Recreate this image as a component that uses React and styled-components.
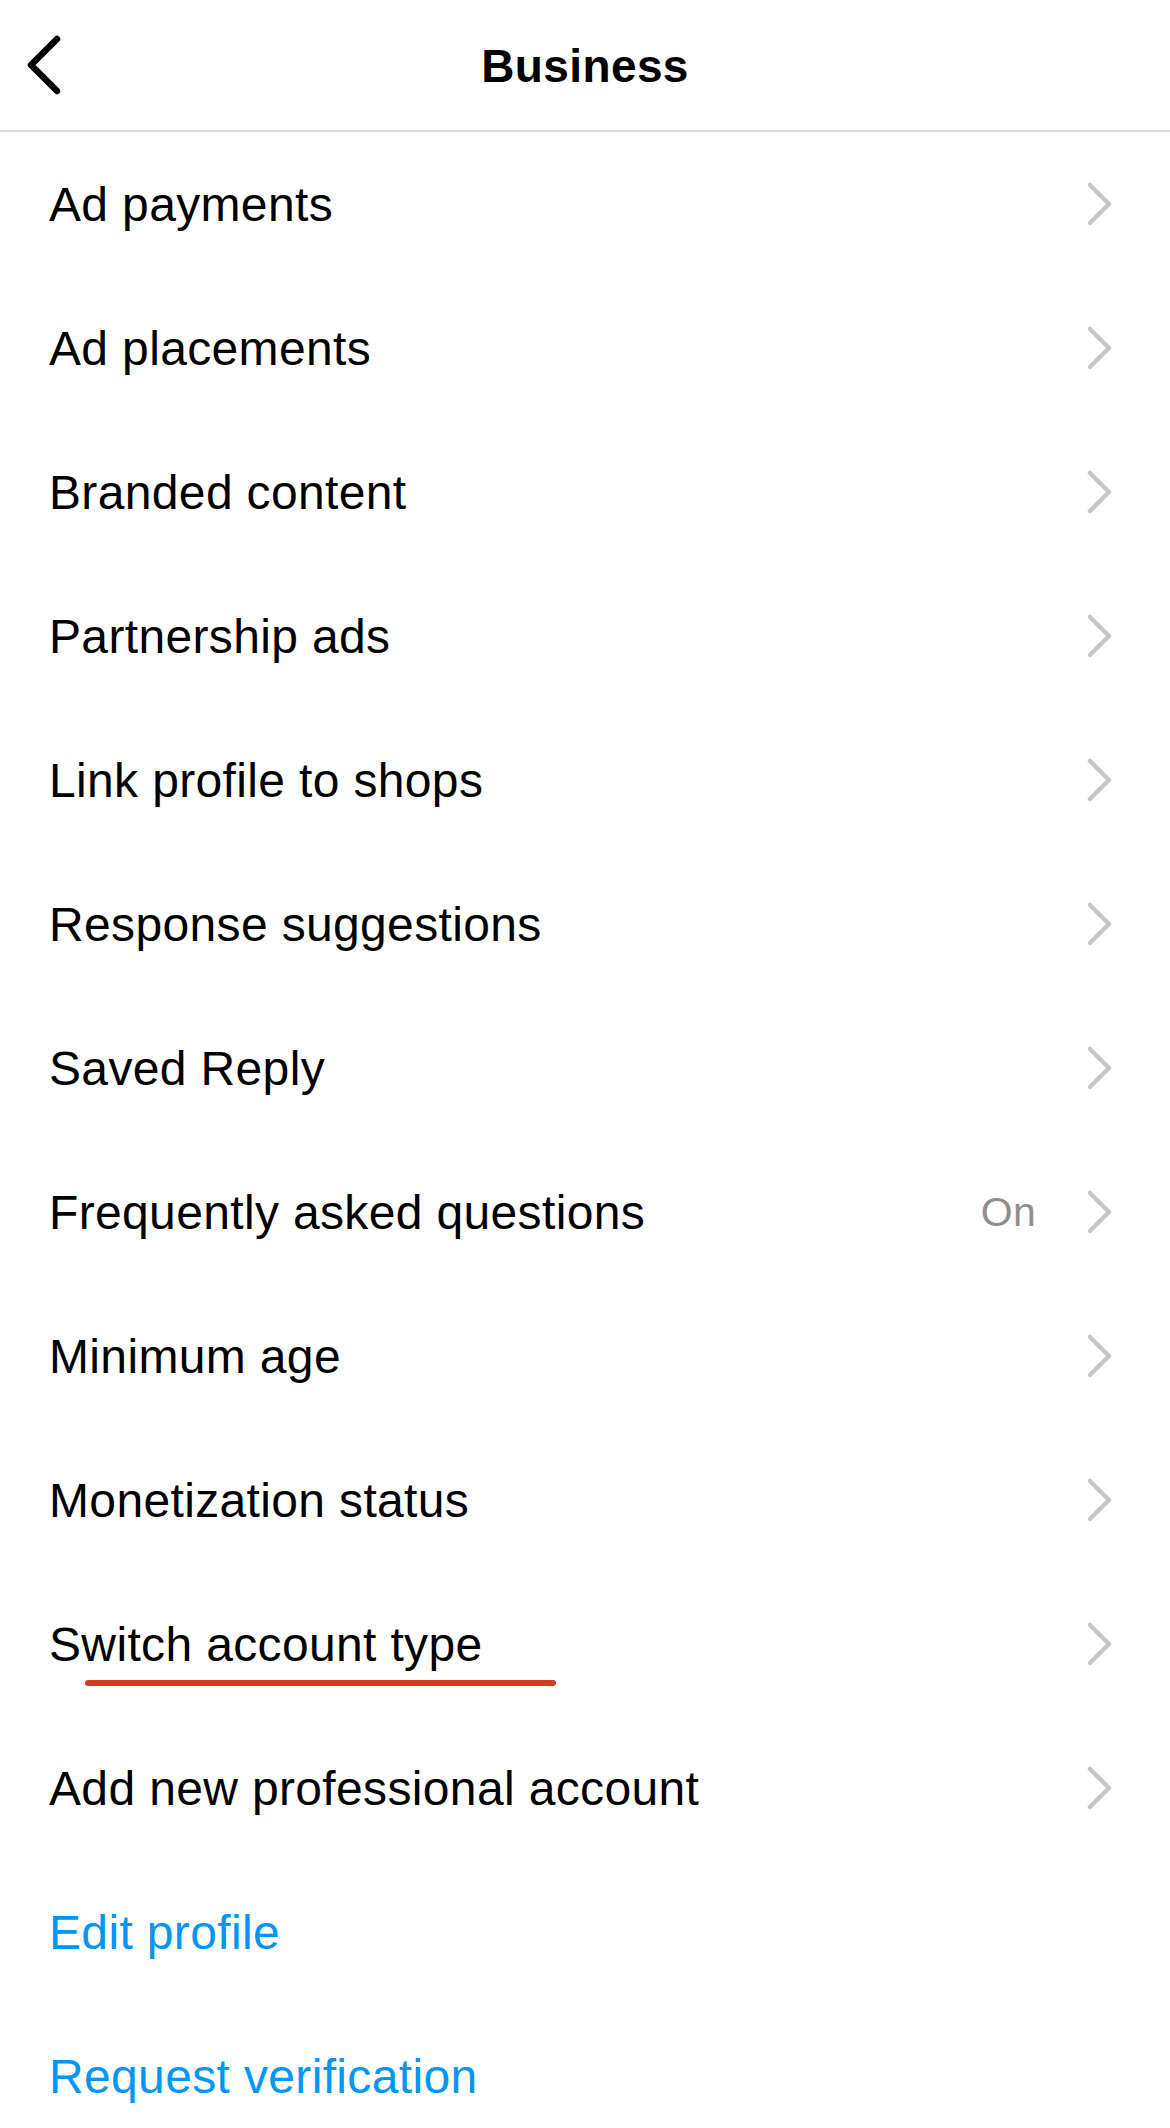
import React from 'react'
import styled, { createGlobalStyle } from 'styled-components'

const GlobalStyle = createGlobalStyle`
  * { box-sizing: border-box; }
  html, body { margin: 0; padding: 0; background: #fff; }
  body {
    font-family: "Liberation Sans", Arial, sans-serif;
    -webkit-font-smoothing: antialiased;
  }
`

const Screen = styled.div`
  width: 1170px;
  height: 2128px;
  overflow: hidden;
  background: #fff;
  color: #000;
`

const Header = styled.header`
  height: 132px;
  display: grid;
  grid-template-columns: 120px 1fr 120px;
  align-items: center;
  border-bottom: 2px solid #dbdbdb;
`

const BackButton = styled.button`
  border: 0;
  background: none;
  padding: 0 0 0 23px;
  height: 100%;
  display: flex;
  align-items: center;
  cursor: pointer;
`

const Title = styled.h1`
  margin: 0;
  padding-top: 2px;
  text-align: center;
  font-size: 46px;
  font-weight: 700;
  letter-spacing: 0.4px;
`

const List = styled.ul`
  list-style: none;
  margin: 0;
  padding: 0;
`

const Row = styled.li`
  position: relative;
  height: 144px;
  display: flex;
  align-items: center;
  padding: 0 56px 0 49px;
`

const Label = styled.span`
  flex: 1;
  font-size: 48px;
  letter-spacing: 0.35px;
  color: ${(p) => (p.$link ? '#0095f6' : '#000')};
`

const Value = styled.span`
  font-size: 41px;
  letter-spacing: 0.3px;
  color: #8e8e8e;
  margin-right: 50px;
`

const Underline = styled.span`
  position: absolute;
  left: 85px;
  top: 108px;
  width: 471px;
  height: 6px;
  border-radius: 3px;
  background: #d33b21;
`

const BackIcon = () => (
  <svg width="40" height="60" viewBox="0 0 40 60" fill="none">
    <path
      d="M34 4 L8 30 L34 56"
      stroke="#000"
      strokeWidth="6.5"
      strokeLinecap="round"
      strokeLinejoin="round"
    />
  </svg>
)

const Chevron = () => (
  <svg width="28" height="46" viewBox="0 0 28 46" fill="none">
    <path
      d="M4 4 L23 23 L4 42"
      stroke="#c7c7c7"
      strokeWidth="4.5"
      strokeLinecap="round"
      strokeLinejoin="round"
    />
  </svg>
)

const items = [
  { label: 'Ad payments' },
  { label: 'Ad placements' },
  { label: 'Branded content' },
  { label: 'Partnership ads' },
  { label: 'Link profile to shops' },
  { label: 'Response suggestions' },
  { label: 'Saved Reply' },
  { label: 'Frequently asked questions', value: 'On' },
  { label: 'Minimum age' },
  { label: 'Monetization status' },
  { label: 'Switch account type', marked: true },
  { label: 'Add new professional account' },
  { label: 'Edit profile', link: true },
  { label: 'Request verification', link: true },
]

export default function App() {
  return (
    <>
      <GlobalStyle />
      <Screen>
        <Header>
          <BackButton aria-label="Back">
            <BackIcon />
          </BackButton>
          <Title>Business</Title>
          <span />
        </Header>
        <List>
          {items.map((item) => (
            <Row key={item.label}>
              <Label $link={item.link}>{item.label}</Label>
              {item.value && <Value>{item.value}</Value>}
              {!item.link && <Chevron />}
              {item.marked && <Underline />}
            </Row>
          ))}
        </List>
      </Screen>
    </>
  )
}
